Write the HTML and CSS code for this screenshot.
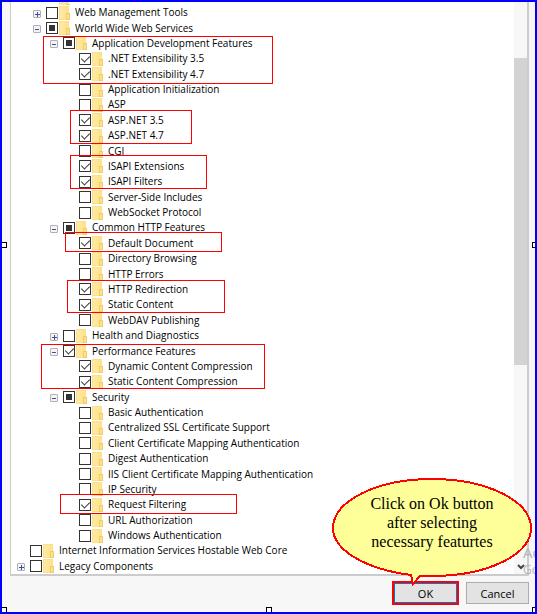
FILE: index.html
```html
<!doctype html>
<html lang="en">
  <head>
    <meta charset="UTF-8" />
    <meta name="viewport" content="width=device-width, initial-scale=1.0" />
    <title>Windows Features</title>
    <link rel="stylesheet" href="styles.css">
  </head>
  <body>
    <main class="dialog">
      <div class="panel">
        <ul class="tree">
          <li class="cut level-1"><i class="folder"></i></li>
          <li class="level-1"><button class="toggle plus" aria-label="Expand"></button><label><input type="checkbox"><i class="folder"></i>Web Management Tools</label></li>
          <li class="level-1"><button class="toggle" aria-label="Collapse"></button><label><input type="checkbox" class="mixed"><i class="folder"></i>World Wide Web Services</label></li>

          <li class="level-2"><button class="toggle" aria-label="Collapse"></button><label><input type="checkbox" class="mixed"><i class="folder"></i>Application Development Features</label></li>
          <li class="level-3"><label><input type="checkbox" checked><i class="folder"></i>.NET Extensibility 3.5</label></li>
          <li class="level-3"><label><input type="checkbox" checked><i class="folder"></i>.NET Extensibility 4.7</label></li>
          <li class="level-3"><label><input type="checkbox"><i class="folder"></i>Application Initialization</label></li>
          <li class="level-3"><label><input type="checkbox"><i class="folder"></i>ASP</label></li>
          <li class="level-3"><label><input type="checkbox" checked><i class="folder"></i>ASP.NET 3.5</label></li>
          <li class="level-3"><label><input type="checkbox" checked><i class="folder"></i>ASP.NET 4.7</label></li>
          <li class="level-3"><label><input type="checkbox"><i class="folder"></i>CGI</label></li>
          <li class="level-3"><label><input type="checkbox" checked><i class="folder"></i>ISAPI Extensions</label></li>
          <li class="level-3"><label><input type="checkbox" checked><i class="folder"></i>ISAPI Filters</label></li>
          <li class="level-3"><label><input type="checkbox"><i class="folder"></i>Server-Side Includes</label></li>
          <li class="level-3"><label><input type="checkbox"><i class="folder"></i>WebSocket Protocol</label></li>

          <li class="level-2"><button class="toggle" aria-label="Collapse"></button><label><input type="checkbox" class="mixed"><i class="folder"></i>Common HTTP Features</label></li>
          <li class="level-3"><label><input type="checkbox" checked><i class="folder"></i>Default Document</label></li>
          <li class="level-3"><label><input type="checkbox"><i class="folder"></i>Directory Browsing</label></li>
          <li class="level-3"><label><input type="checkbox"><i class="folder"></i>HTTP Errors</label></li>
          <li class="level-3"><label><input type="checkbox" checked><i class="folder"></i>HTTP Redirection</label></li>
          <li class="level-3"><label><input type="checkbox" checked><i class="folder"></i>Static Content</label></li>
          <li class="level-3"><label><input type="checkbox"><i class="folder"></i>WebDAV Publishing</label></li>

          <li class="level-2"><button class="toggle plus" aria-label="Expand"></button><label><input type="checkbox"><i class="folder"></i>Health and Diagnostics</label></li>

          <li class="level-2"><button class="toggle" aria-label="Collapse"></button><label><input type="checkbox" checked><i class="folder"></i>Performance Features</label></li>
          <li class="level-3"><label><input type="checkbox" checked><i class="folder"></i>Dynamic Content Compression</label></li>
          <li class="level-3"><label><input type="checkbox" checked><i class="folder"></i>Static Content Compression</label></li>

          <li class="level-2"><button class="toggle" aria-label="Collapse"></button><label><input type="checkbox" class="mixed"><i class="folder"></i>Security</label></li>
          <li class="level-3"><label><input type="checkbox"><i class="folder"></i>Basic Authentication</label></li>
          <li class="level-3"><label><input type="checkbox"><i class="folder"></i>Centralized SSL Certificate Support</label></li>
          <li class="level-3"><label><input type="checkbox"><i class="folder"></i>Client Certificate Mapping Authentication</label></li>
          <li class="level-3"><label><input type="checkbox"><i class="folder"></i>Digest Authentication</label></li>
          <li class="level-3"><label><input type="checkbox"><i class="folder"></i>IIS Client Certificate Mapping Authentication</label></li>
          <li class="level-3"><label><input type="checkbox"><i class="folder"></i>IP Security</label></li>
          <li class="level-3"><label><input type="checkbox" checked><i class="folder"></i>Request Filtering</label></li>
          <li class="level-3"><label><input type="checkbox"><i class="folder"></i>URL Authorization</label></li>
          <li class="level-3"><label><input type="checkbox"><i class="folder"></i>Windows Authentication</label></li>

          <li class="level-0"><label><input type="checkbox"><i class="folder"></i>Internet Information Services Hostable Web Core</label></li>
          <li class="level-0"><button class="toggle plus" aria-label="Expand"></button><label><input type="checkbox"><i class="folder"></i>Legacy Components</label></li>
        </ul>
        <div class="scrollbar">
          <div class="thumb"></div>
          <svg class="arrow" width="8" height="6" viewBox="0 0 8 6"><path d="M1 1l3 3 3-3" fill="none" stroke="#444" stroke-width="2" /></svg>
        </div>
      </div>

      <div class="actions">
        <button class="button ok">OK</button>
        <button class="button">Cancel</button>
      </div>

      <!-- red frames round the features to tick -->
      <div class="mark mark-net"></div>
      <div class="mark mark-asp"></div>
      <div class="mark mark-isapi"></div>
      <div class="mark mark-default"></div>
      <div class="mark mark-http"></div>
      <div class="mark mark-performance"></div>
      <div class="mark mark-request"></div>

      <div class="watermark"><span>Ac</span><small>Go</small></div>

      <div class="callout">
        <svg width="200" height="108" viewBox="0 0 200 108">
          <path d="M79 97C33 91 1 72 1 50C1 23 45 1 100 1S199 23 199 50S155 98 100 98C96 98 92 98 88 98L81 106Z" fill="#ffff99" stroke="#f00" stroke-width="2" shape-rendering="crispEdges" />
        </svg>
        <p>Click on Ok button<br>after selecting<br>necessary featurtes</p>
      </div>

      <!-- selection handles -->
      <span class="handle left"></span>
      <span class="handle right"></span>
      <span class="handle bottom-left"></span>
      <span class="handle bottom"></span>
      <span class="handle bottom-right"></span>
    </main>
  </body>
</html>
```
FILE: styles.css
```css
* {
  box-sizing: border-box;
}

body {
  margin: 0;
  font-family: "Open Sans", "Noto Sans", sans-serif;
  font-size: 10px;
  color: #000;
}

.dialog {
  position: relative;
  display: flex;
  flex-direction: column;
  min-height: 100vh;
  padding: 0 6px 0 8px;
  border: 2px solid #00f;
  background: #f7f7f7;
  overflow: hidden;
}

.panel {
  flex: 1;
  display: flex;
  border: 2px solid #ccc;
  border-width: 0 2px 2px 1px;
  background: #fff;
}

/* --- feature tree --- */

.tree {
  flex: 1;
  display: grid;
  grid-template-rows: 3px;
  grid-auto-rows: minmax(15px, 1fr);
  margin: 0;
  padding: 0;
  list-style: none;
}

.tree li {
  display: flex;
  align-items: center;
  height: 100%;
  min-height: 0;
  line-height: 15px;
  white-space: nowrap;
}

.tree label {
  display: flex;
  align-items: center;
}

.level-0 { padding-left: 6px; }
.level-1 { padding-left: 22px; }
.level-2 { padding-left: 39px; }
.level-3 { padding-left: 55px; }

.tree li:not(:has(.toggle)) label {
  margin-left: 13px;
}

.tree .cut {
  padding-left: 48px;
  overflow: hidden;
}

.toggle {
  position: relative;
  flex: none;
  width: 8px;
  height: 8px;
  margin: 2px 5px 0 0;
  padding: 0;
  border: 1px solid #b0b0b0;
  border-radius: 1px;
  background: #f4f4f4;
}

.toggle::before,
.toggle.plus::after {
  content: "";
  position: absolute;
  left: 1px;
  top: 3px;
  width: 4px;
  height: 1px;
  background: #3a4fa8;
}

.toggle.plus::before {
  width: 5px;
}

.toggle.plus::after {
  left: 3px;
  top: 1px;
  width: 1px;
  height: 5px;
}

input {
  position: relative;
  appearance: none;
  flex: none;
  width: 12px;
  height: 12px;
  margin: 0 1px 0 0;
  border: 1px solid #333;
  background: #fff;
}

input:checked::after {
  content: "";
  position: absolute;
  left: 3px;
  top: 0;
  width: 4px;
  height: 7px;
  border: solid #333;
  border-width: 0 1px 1px 0;
  transform: rotate(45deg);
}

.mixed::after {
  content: "";
  position: absolute;
  inset: 2px;
  background: #333;
}

.folder {
  position: relative;
  flex: none;
  width: 10px;
  height: 14px;
  margin: 0 6px 0 0;
  border: 1px solid #fadf8c;
  background: linear-gradient(90deg, #ffeaa5, #ffe28a);
}

.folder::after {
  content: "";
  position: absolute;
  right: -2px;
  bottom: -1px;
  width: 2px;
  height: 5px;
  border: 1px solid #f0cd68;
}

/* --- scrollbar --- */

.scrollbar {
  display: flex;
  flex-direction: column;
  width: 13px;
  padding: 56px 0 4px;
  background: #f7f7f7;
}

.thumb {
  height: 60%;
  background: #d3d3d3;
}

.arrow {
  margin: auto 0 0 3px;
}

/* --- buttons --- */

.actions {
  display: flex;
  justify-content: flex-end;
  gap: 8px;
  padding: 6px 0 8px;
}

.button {
  width: 63px;
  height: 22px;
  padding: 0;
  border: 1px solid #adadad;
  background: #e3e3e3;
  font: inherit;
  font-size: 11px;
}

.button.ok {
  width: 65px;
  border: 1px solid #0078d7;
  outline: 2px solid #f00;
  outline-offset: -1px;
  box-shadow: inset 0 0 0 1px #0078d7;
}

/* --- annotations --- */

.mark {
  position: absolute;
  border: 1px solid #f00;
}

.mark-net { left: 41px; top: 34px; width: 230px; height: 48px; }
.mark-asp { left: 68px; top: 108px; width: 122px; height: 34px; }
.mark-isapi { left: 68px; top: 153px; width: 137px; height: 34px; }
.mark-default { left: 63px; top: 230px; width: 157px; height: 20px; }
.mark-http { left: 65px; top: 278px; width: 158px; height: 33px; }
.mark-performance { left: 39px; top: 342px; width: 224px; height: 45px; }
.mark-request { left: 58px; top: 492px; width: 177px; height: 20px; }

.watermark {
  position: absolute;
  left: 521px;
  bottom: 34px;
  display: flex;
  flex-direction: column;
  color: #b4b4b4;
  font-size: 15px;
  line-height: 20px;
}

.watermark small {
  font-size: 12px;
  line-height: 16px;
}

.callout {
  position: absolute;
  right: 3px;
  bottom: 26px;
  width: 200px;
  height: 108px;
}

.callout p {
  position: absolute;
  inset: 16px 0 auto;
  margin: 0;
  font-family: "Liberation Serif", serif;
  font-size: 16px;
  line-height: 19px;
  text-align: center;
}

.handle {
  position: absolute;
  width: 6px;
  height: 6px;
  border: 1px solid #000;
  background: #fff;
}

.left { left: -1px; top: 240px; }
.right { right: -3px; top: 240px; }
.bottom-left { left: -1px; bottom: -1px; }
.bottom { left: 264px; bottom: -1px; }
.bottom-right { right: -3px; bottom: -1px; }
```
